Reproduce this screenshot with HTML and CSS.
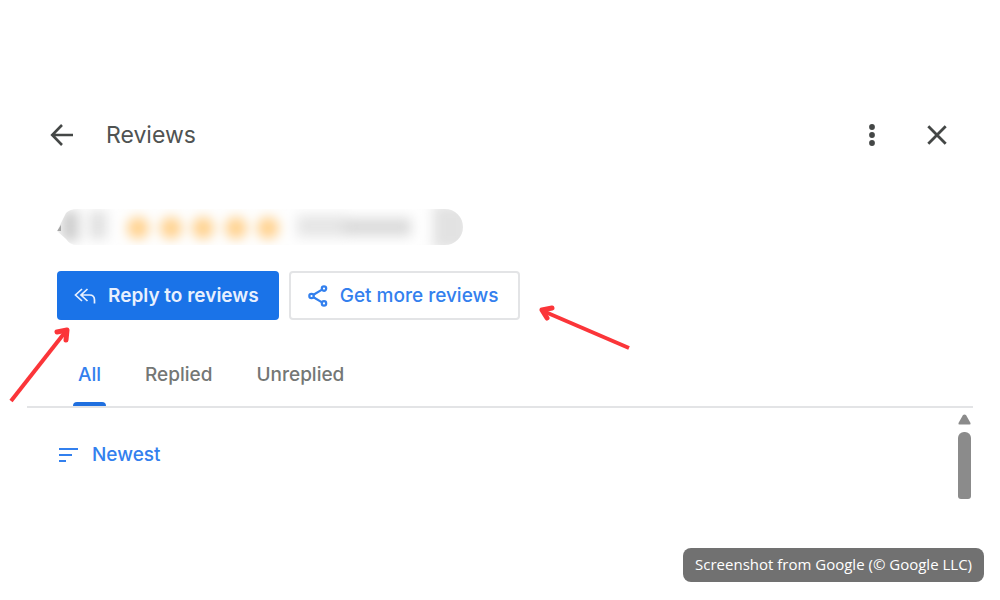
FILE: index.html
```html
<!DOCTYPE html>
<html lang="en">

<head>
    <meta charset="UTF-8">
    <meta name="viewport" content="width=device-width, initial-scale=1.0">
    <title>Reviews</title>
    <link rel="stylesheet" href="styles.css">
</head>

<body>
    <main class="panel">
        <header class="panel-header">
            <button class="icon-btn" type="button" aria-label="Back">
                <svg width="24" height="24" viewBox="0 0 24 24" fill="none" stroke="#444746" stroke-width="2.6">
                    <path d="M23 12H2.5M12 2L2.2 12L12 22" />
                </svg>
            </button>
            <h1>Reviews</h1>
            <button class="icon-btn" type="button" aria-label="More options">
                <svg width="24" height="24" viewBox="0 0 24 24" fill="#444746">
                    <circle cx="12" cy="4" r="2.9" />
                    <circle cx="12" cy="12" r="2.9" />
                    <circle cx="12" cy="20" r="2.9" />
                </svg>
            </button>
            <button class="icon-btn close" type="button" aria-label="Close">
                <svg width="24" height="24" viewBox="0 0 24 24" fill="none" stroke="#444746" stroke-width="2.8">
                    <path d="M3.3 3.3L20.7 20.7M20.7 3.3L3.3 20.7" />
                </svg>
            </button>
        </header>

        <!-- rating is blurred out on purpose -->
        <svg class="rating" width="408" height="40" viewBox="0 0 408 40" role="img" aria-label="Rating hidden">
            <defs>
                <filter id="soft" filterUnits="userSpaceOnUse" x="-40" y="-40" width="490" height="120">
                    <feGaussianBlur stdDeviation="6" />
                </filter>
                <clipPath id="pill">
                    <path d="M0 24L9 6Q13 2 20 2H388A18 18 0 0 1 388 38H20Q13 38 9 32Z" />
                </clipPath>
            </defs>
            <g clip-path="url(#pill)">
                <rect width="408" height="40" fill="#fefefe" />
                <g filter="url(#soft)">
                    <rect x="4" y="4" width="18" height="30" fill="#cfcfcf" />
                    <rect x="32" y="4" width="18" height="28" fill="#e2e2e2" />
                    <g fill="#ffd28f">
                        <circle cx="81" cy="21" r="11" />
                        <circle cx="114" cy="21" r="11" />
                        <circle cx="146" cy="21" r="11" />
                        <circle cx="179" cy="21" r="11" />
                        <circle cx="211" cy="21" r="11" />
                    </g>
                    <rect x="240" y="8" width="50" height="22" fill="#e6e6e6" />
                    <rect x="286" y="11" width="68" height="18" fill="#dcdcdc" />
                    <rect x="376" y="-2" width="36" height="44" fill="#e2e2e2" />
                </g>
                <path d="M0 24L4 18V24Z" fill="#777" opacity="0.6" />
            </g>
        </svg>

        <div class="actions">
            <button class="btn btn-primary" type="button">
                <svg width="22" height="16" viewBox="0 0 22 16" fill="none" stroke="currentColor" stroke-width="1.7">
                    <path d="M8 1L1.5 7L8 13M13.5 1L7 7L13.5 13M7.5 7H15.5Q20.5 7 20.5 12V15.5" />
                </svg>
                Reply to reviews
            </button>
            <button class="btn btn-outline" type="button">
                <svg width="20" height="22" viewBox="0 0 20 22" fill="none" stroke="currentColor" stroke-width="2.2">
                    <path d="M5.5 9.8L14 4.6M5.5 12.2L14 17.4" />
                    <circle cx="3.5" cy="11" r="2.2" />
                    <circle cx="16" cy="3.6" r="2.2" />
                    <circle cx="16" cy="18.4" r="2.2" />
                </svg>
                Get more reviews
            </button>
            <svg class="arrow arrow-reply" width="70" height="80" viewBox="0 0 70 80">
                <path d="M6 76L61 6" />
                <path class="tip" d="M52 7L62 5L61 15" />
            </svg>
            <svg class="arrow arrow-more" width="100" height="56" viewBox="0 0 100 56">
                <path d="M94 48L8 11" />
                <path class="tip" d="M17 8L7 10L12 18" />
            </svg>
        </div>

        <nav class="tabs">
            <a class="tab active" href="#all">All</a>
            <a class="tab" href="#replied">Replied</a>
            <a class="tab" href="#unreplied">Unreplied</a>
        </nav>

        <section class="list">
            <button class="sort" type="button">
                <svg width="20" height="14" viewBox="0 0 20 14" fill="none" stroke="currentColor" stroke-width="2">
                    <path d="M0 1H19M0 7H13M0 13H7" />
                </svg>
                Newest
            </button>
            <div class="scrollbar">
                <svg width="13" height="11" viewBox="0 0 13 11" fill="#8b8b8b">
                    <path d="M5 1Q6.5 0 8 1L12.500 9Q13 10.500 11.500 10.500H1.500Q0 10.500 0.500 9Z" />
                </svg>
                <div class="thumb"></div>
            </div>
        </section>
    </main>

    <footer class="credit">Screenshot from Google (© Google LLC)</footer>
</body>

</html>
```
FILE: styles.css
```css
* {
    margin: 0;
    padding: 0;
    box-sizing: border-box;
}

body {
    background: #fff;
    font-family: Inter, "Liberation Sans", sans-serif;
    color: #505352;
}

button {
    border: none;
    background: transparent;
    font-family: inherit;
    cursor: pointer;
}

.panel {
    margin: 0 27px;
    padding-top: 111px;
}

.panel-header {
    display: flex;
    align-items: center;
    height: 48px;
    padding: 0 24px 0 23px;
}

.panel-header h1 {
    flex: 1;
    margin-left: 32px;
    font-size: 23px;
    font-weight: 400;
}

.icon-btn {
    width: 24px;
    height: 24px;
}

.icon-btn svg {
    display: block;
}

.close {
    margin-left: 41px;
}

.rating {
    display: block;
    margin: 48px 0 0 30px;
}

.actions {
    position: relative;
    display: flex;
    gap: 10px;
    margin: 24px 30px 0;
}

.btn {
    display: flex;
    align-items: center;
    gap: 12px;
    height: 49px;
    padding: 0 20px 0 17px;
    border-radius: 4px;
    font-size: 19px;
    font-weight: 500;
    white-space: nowrap;
}

.btn-primary {
    background: #1a73e8;
    color: #e8f0fe;
    font-weight: 600;
}

.btn-outline {
    border: 2px solid #e3e4e6;
    color: #3380ee;
}

.arrow {
    position: absolute;
    fill: none;
    stroke: #fb3539;
    stroke-width: 4;
}

.arrow .tip {
    stroke-width: 5;
    stroke-linecap: round;
    stroke-linejoin: round;
}

.arrow-reply {
    left: -52px;
    top: 54px;
}

.arrow-more {
    left: 478px;
    top: 29px;
}

.tabs {
    display: flex;
    gap: 34px;
    height: 88px;
    padding: 30px 46px 0;
    border-bottom: 2px solid #e3e4e6;
}

.tab {
    position: relative;
    padding: 13px 5px 0;
    color: #747775;
    font-size: 19px;
    font-weight: 500;
    line-height: 24px;
    text-decoration: none;
}

.tab.active {
    color: #3380ee;
}

.tab.active::after {
    content: '';
    position: absolute;
    left: 0;
    right: 0;
    bottom: 0;
    height: 4px;
    border-radius: 4px 4px 0 0;
    background: #1f6fdf;
}

.list {
    display: flex;
    justify-content: space-between;
    align-items: flex-start;
    padding: 6px 2px 0 32px;
}

.sort {
    display: flex;
    align-items: center;
    gap: 13px;
    margin-top: 29px;
    color: #3380ee;
    font-size: 19px;
    font-weight: 500;
    line-height: 24px;
}

.scrollbar {
    width: 13px;
}

.scrollbar svg {
    display: block;
}

.thumb {
    height: 67px;
    margin-top: 7px;
    border-radius: 6px 6px 3px 3px;
    background: #8b8b8b;
}

.credit {
    width: fit-content;
    margin: 49px 16px 0 auto;
    padding: 4px 12px 6px;
    border-radius: 8px;
    background: #717171;
    color: #fff;
    font-family: "Open Sans", "Noto Sans", sans-serif;
    font-size: 15px;
    line-height: 24px;
}
```
